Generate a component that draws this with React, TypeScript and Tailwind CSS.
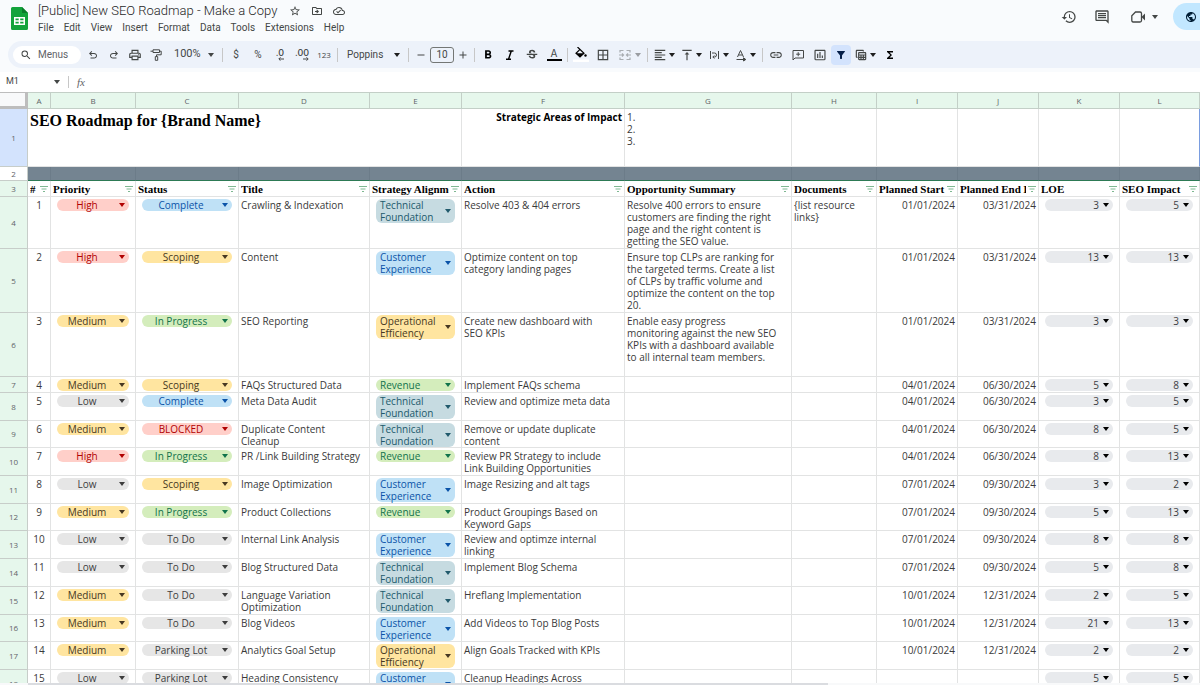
import type { ReactNode } from "react";
import {
  MdAdd,
  MdBorderAll,
  MdFilterAlt,
  MdFormatAlignLeft,
  MdFormatBold,
  MdFormatColorFill,
  MdFormatItalic,
  MdFunctions,
  MdHistory,
  MdInsertChartOutlined,
  MdLink,
  MdOutlineAddComment,
  MdOutlineCloudDone,
  MdOutlineDriveFileMove,
  MdOutlineInsertComment,
  MdOutlinePrint,
  MdPublic,
  MdRemove,
  MdSearch,
  MdStarBorder,
  MdStrikethroughS,
  MdTableView,
  MdVerticalAlignTop,
} from "react-icons/md";

type Row = {
  n: number;
  height: string;
  priority: string;
  status: string;
  title: string;
  strategy: string;
  action: string;
  summary?: string;
  docs?: string;
  start?: string;
  end?: string;
  loe: number;
  impact: number;
};

const TECH = "Technical\nFoundation";
const CUSTOMER = "Customer\nExperience";
const OPS = "Operational\nEfficiency";

const rows: Row[] = [
  { n: 1, height: "h-[52px]", priority: "High", status: "Complete", title: "Crawling & Indexation", strategy: TECH, action: "Resolve 403 & 404 errors", summary: "Resolve 400 errors to ensure\ncustomers are finding the right\npage and the right content is\ngetting the SEO value.", docs: "{list resource\nlinks}", start: "01/01/2024", end: "03/31/2024", loe: 3, impact: 5 },
  { n: 2, height: "h-[64px]", priority: "High", status: "Scoping", title: "Content", strategy: CUSTOMER, action: "Optimize content on top\ncategory landing pages", summary: "Ensure top CLPs are ranking for\nthe targeted terms. Create a list\nof CLPs by traffic volume and\noptimize the content on the top\n20.", start: "01/01/2024", end: "03/31/2024", loe: 13, impact: 13 },
  { n: 3, height: "h-[64px]", priority: "Medium", status: "In Progress", title: "SEO Reporting", strategy: OPS, action: "Create new dashboard with\nSEO KPIs", summary: "Enable easy progress\nmonitoring against the new SEO\nKPIs with a dashboard available\nto all internal team members.", start: "01/01/2024", end: "03/31/2024", loe: 3, impact: 3 },
  { n: 4, height: "h-[16px]", priority: "Medium", status: "Scoping", title: "FAQs Structured Data", strategy: "Revenue", action: "Implement FAQs schema", start: "04/01/2024", end: "06/30/2024", loe: 5, impact: 8 },
  { n: 5, height: "h-[28px]", priority: "Low", status: "Complete", title: "Meta Data Audit", strategy: TECH, action: "Review and optimize meta data", start: "04/01/2024", end: "06/30/2024", loe: 3, impact: 5 },
  { n: 6, height: "h-[27px]", priority: "Medium", status: "BLOCKED", title: "Duplicate Content\nCleanup", strategy: TECH, action: "Remove or update duplicate\ncontent", start: "04/01/2024", end: "06/30/2024", loe: 8, impact: 5 },
  { n: 7, height: "h-[28px]", priority: "High", status: "In Progress", title: "PR /Link Building Strategy", strategy: "Revenue", action: "Review PR Strategy to include\nLink Building Opportunities", start: "04/01/2024", end: "06/30/2024", loe: 8, impact: 13 },
  { n: 8, height: "h-[28px]", priority: "Low", status: "Scoping", title: "Image Optimization", strategy: CUSTOMER, action: "Image Resizing and alt tags", start: "07/01/2024", end: "09/30/2024", loe: 3, impact: 2 },
  { n: 9, height: "h-[27px]", priority: "Medium", status: "In Progress", title: "Product Collections", strategy: "Revenue", action: "Product Groupings Based on\nKeyword Gaps", start: "07/01/2024", end: "09/30/2024", loe: 5, impact: 13 },
  { n: 10, height: "h-[28px]", priority: "Low", status: "To Do", title: "Internal Link Analysis", strategy: CUSTOMER, action: "Review and optimze internal\nlinking", start: "07/01/2024", end: "09/30/2024", loe: 8, impact: 8 },
  { n: 11, height: "h-[28px]", priority: "Low", status: "To Do", title: "Blog Structured Data", strategy: TECH, action: "Implement Blog Schema", start: "07/01/2024", end: "09/30/2024", loe: 5, impact: 8 },
  { n: 12, height: "h-[28px]", priority: "Medium", status: "To Do", title: "Language Variation\nOptimization", strategy: TECH, action: "Hreflang Implementation", start: "10/01/2024", end: "12/31/2024", loe: 2, impact: 5 },
  { n: 13, height: "h-[27px]", priority: "Medium", status: "To Do", title: "Blog Videos", strategy: CUSTOMER, action: "Add Videos to Top Blog Posts", start: "10/01/2024", end: "12/31/2024", loe: 21, impact: 13 },
  { n: 14, height: "h-[28px]", priority: "Medium", status: "Parking Lot", title: "Analytics Goal Setup", strategy: OPS, action: "Align Goals Tracked with KPIs", start: "10/01/2024", end: "12/31/2024", loe: 2, impact: 2 },
  { n: 15, height: "h-[28px]", priority: "Low", status: "Parking Lot", title: "Heading Consistency", strategy: CUSTOMER, action: "Cleanup Headings Across", loe: 5, impact: 5 },
];

const columns = [
  { letter: "A", width: "w-[23px]", label: "#" },
  { letter: "B", width: "w-[85px]", label: "Priority" },
  { letter: "C", width: "w-[103px]", label: "Status" },
  { letter: "D", width: "w-[131px]", label: "Title" },
  { letter: "E", width: "w-[92px]", label: "Strategy Alignment" },
  { letter: "F", width: "w-[163px]", label: "Action" },
  { letter: "G", width: "w-[167px]", label: "Opportunity Summary" },
  { letter: "H", width: "w-[85px]", label: "Documents" },
  { letter: "I", width: "w-[81px]", label: "Planned Start Date" },
  { letter: "J", width: "w-[81px]", label: "Planned End Date" },
  { letter: "K", width: "w-[81px]", label: "LOE" },
  { letter: "L", width: "w-[80px]", label: "SEO Impact" },
];

const chipColors: Record<string, string> = {
  High: "bg-[#ffcfc9] text-[#b10202]",
  BLOCKED: "bg-[#ffcfc9] text-[#b10202]",
  Medium: "bg-[#ffe5a0] text-[#473822]",
  Scoping: "bg-[#ffe5a0] text-[#473822]",
  [OPS]: "bg-[#ffe5a0] text-[#473822]",
  Complete: "bg-[#bfe1f6] text-[#0a53a8]",
  [CUSTOMER]: "bg-[#bfe1f6] text-[#0a53a8]",
  "In Progress": "bg-[#d4edbc] text-[#11734b]",
  Revenue: "bg-[#d4edbc] text-[#11734b]",
  [TECH]: "bg-[#c6dbe1] text-[#215a6c]",
};

const menus = ["File", "Edit", "View", "Insert", "Format", "Data", "Tools", "Extensions", "Help"];

const cell = "border-r border-b border-[#e2e3e3] px-0.5 pt-0.5 pb-0 align-top whitespace-pre";
const rowHead = "border-r border-b border-[#c7cdc9] p-0 text-center align-middle text-[8px] font-normal text-[#5f6368]";

function Caret({ className = "" }: { className?: string }) {
  return (
    <svg viewBox="0 0 6 4" className={`h-1 w-1.5 shrink-0 fill-current ${className}`} aria-hidden="true">
      <path d="M0 0h6L3 4z" />
    </svg>
  );
}

function Chip({ value, options, label }: { value: string; options: string[]; label: string }) {
  const color = chipColors[value] ?? "bg-[#e6e6e6] text-[#3d3d3d]";
  return (
    <div className={`relative mx-1 flex h-3 items-center rounded-full ${color}`}>
      <select
        aria-label={label}
        defaultValue={value}
        className="h-4 w-full shrink-0 appearance-none pr-3 text-center leading-4 outline-none [text-align-last:center]"
      >
        {options.map((o) => (
          <option key={o}>{o}</option>
        ))}
      </select>
      <Caret className="pointer-events-none absolute top-1 right-1" />
    </div>
  );
}

function ScoreChip({ value, label }: { value: number; label: string }) {
  return (
    <div className="relative mx-1 flex h-3 items-center rounded-full bg-[#e8eaed] text-[#3c4043]">
      <select
        aria-label={label}
        defaultValue={value}
        className="h-4 w-full shrink-0 appearance-none pr-3.5 text-right leading-4 outline-none [text-align-last:right]"
      >
        {[1, 2, 3, 5, 8, 13, 21].map((o) => (
          <option key={o}>{o}</option>
        ))}
      </select>
      <Caret className="pointer-events-none absolute top-1 right-1 text-black" />
    </div>
  );
}

function StrategyChip({ value }: { value: string }) {
  return (
    <div className="px-1">
      <button
        type="button"
        aria-haspopup="listbox"
        className={`flex w-full items-center justify-between rounded-md px-1 text-left leading-3 whitespace-pre ${chipColors[value]}`}
      >
        {value}
        <Caret />
      </button>
    </div>
  );
}

function Tool({ label, className = "w-[22px]", children }: { label: string; className?: string; children: ReactNode }) {
  return (
    <button
      type="button"
      aria-label={label}
      className={`flex h-5 shrink-0 items-center justify-center rounded-sm text-[#444746] ${className}`}
    >
      {children}
    </button>
  );
}

function ToolMenu({ label, className = "w-[27px]", children }: { label: string; className?: string; children: ReactNode }) {
  return (
    <Tool label={label} className={`gap-0.5 ${className}`}>
      {children}
      <Caret className="text-[#1f1f1f]" />
    </Tool>
  );
}

function Sep() {
  return <span className="mx-0.5 h-3.5 w-px shrink-0 bg-[#c7c7c7]" />;
}

// Icons drawn on the 960 unit symbol grid
function Symbol({ d }: { d: string }) {
  return (
    <svg viewBox="0 -960 960 960" className="size-3 fill-current" aria-hidden="true">
      <path d={d} />
    </svg>
  );
}

function FilterLines() {
  return (
    <svg viewBox="0 0 8 6" className="h-1.5 w-2 shrink-0 fill-none stroke-[#7fb892]" aria-hidden="true">
      <path d="M0 .5h8M1.5 3h5M3 5.5h2" />
    </svg>
  );
}

function TopBar() {
  return (
    <header className="flex h-[41px] shrink-0 items-start">
      <svg viewBox="0 0 17 23" className="mt-[7px] ml-[11px] h-[23px] w-[17px] shrink-0" aria-label="Sheets">
        <path d="M1.5 0H11l6 6v15.500a1.500 1.500 0 0 1-1.500 1.500h-14A1.500 1.500 0 0 1 0 21.500v-20A1.500 1.500 0 0 1 1.500 0z" fill="#13a33b" />
        <path d="M11 0l6 6h-6z" fill="#0b7d2b" />
        <path d="M3 10h11v8H3zM4.500 11.500v1.800h3.200v-1.800zm4.700 0v1.800h3.300v-1.800zM4.500 14.800v1.700h3.200v-1.700zm4.700 0v1.700h3.300v-1.700z" fill="#fff" fillRule="evenodd" />
      </svg>
      <div className="ml-2.5 pt-[3px]">
        <div className="flex h-4 items-center">
          <h1 className="font-['Roboto',sans-serif] text-[13px] leading-4 font-light whitespace-nowrap text-[#1f1f1f]">
            [Public] New SEO Roadmap - Make a Copy
          </h1>
          <div className="ml-3 flex items-center gap-2.5 text-[#444746]">
            <button type="button" aria-label="Star"><MdStarBorder className="size-3" /></button>
            <button type="button" aria-label="Move"><MdOutlineDriveFileMove className="size-3" /></button>
            <button type="button" aria-label="Saved to Drive"><MdOutlineCloudDone className="size-3" /></button>
          </div>
        </div>
        <nav className="flex gap-2.5 font-['Roboto',sans-serif] text-[10px] leading-[18px] text-[#444746]">
          {menus.map((m) => (
            <button type="button" key={m}>{m}</button>
          ))}
        </nav>
      </div>
      <div className="ml-auto flex items-center pt-[3px] text-[#444746]">
        <button type="button" aria-label="Version history"><MdHistory className="size-4" /></button>
        <button type="button" aria-label="Comments" className="ml-[17px]"><MdOutlineInsertComment className="size-4" /></button>
        <button type="button" aria-label="Join a call" className="ml-[21px] flex items-center gap-1.5">
          <svg viewBox="0 0 15 12" className="h-3 w-[15px]" aria-hidden="true">
            <path d="M4.500 1H9a1.500 1.500 0 0 1 1.500 1.500v7A1.500 1.500 0 0 1 9 11H2A1.500 1.500 0 0 1 .8 9.500V4.700z" fill="none" stroke="currentColor" strokeWidth="1.300" />
            <path d="M10.500 6l3.500-3.500v7z" fill="currentColor" />
          </svg>
          <Caret />
        </button>
        <button type="button" aria-label="Share" className="ml-[15px] flex h-[27px] w-[27px] items-center justify-end rounded-l-full bg-[#c2e7ff] pr-[3px] text-[#001d35]">
          <MdPublic className="size-3" />
        </button>
      </div>
    </header>
  );
}

function Toolbar() {
  return (
    <div className="ml-2 flex h-[27px] shrink-0 items-center rounded-l-full bg-[#edf2fa] pl-[5px] text-[#444746]">
      <label className="flex h-[18px] w-[68px] shrink-0 items-center gap-1.5 rounded-full bg-white pl-[7px]">
        <MdSearch className="size-3 shrink-0" />
        <input aria-label="Menus" placeholder="Menus" className="w-10 font-['Roboto',sans-serif] text-[10px] leading-4 outline-none placeholder:text-[#5f6368]" />
      </label>
      <div className="ml-px flex">
        <Tool label="Undo" className="w-[21px]">
          <Symbol d="M280-200v-80h284q63 0 109.500-40T720-420q0-60-46.500-100T564-560H312l104 104-56 56-200-200 200-200 56 56-104 104h252q97 0 166.500 63T800-420q0 94-69.500 157T564-200H280Z" />
        </Tool>
        <Tool label="Redo" className="w-[21px]">
          <Symbol d="M396-200q-97 0-166.500-63T160-420q0-94 69.500-157T396-640h252L544-744l56-56 200 200-200 200-56-56 104-104H396q-63 0-109.500 40T240-420q0 60 46.500 100T396-280h284v80H396Z" />
        </Tool>
        <Tool label="Print" className="w-[21px]"><MdOutlinePrint className="size-3.5" /></Tool>
        <Tool label="Paint format" className="w-[21px]">
          <svg viewBox="0 0 12 12" className="size-3 fill-none stroke-current" aria-hidden="true">
            <path d="M3 .8h6.500v2.700H3zM.5 2.200H3M9.500 2.200h1.700v3.600H6.500v1.700M5.300 7.600h2.400v3.700H5.300z" />
          </svg>
        </Tool>
      </div>
      <label className="flex w-[54px] shrink-0 items-center">
        <select aria-label="Zoom" className="w-[42px] appearance-none pl-2 font-['Roboto',sans-serif] text-[11px] outline-none">
          <option>100%</option>
        </select>
        <Caret />
      </label>
      <Sep />
      <Tool label="Currency"><span className="font-['Roboto',sans-serif] text-[10px]">$</span></Tool>
      <Tool label="Percent"><span className="font-['Roboto',sans-serif] text-[10px]">%</span></Tool>
      <Tool label="Decrease decimals">
        <span className="flex flex-col items-end text-[9px] leading-[8px] font-medium">
          .0
          <svg viewBox="0 0 6 4" className="h-1 w-1.5 fill-none stroke-current" aria-hidden="true"><path d="M6 2H1M2.500.3L.8 2l1.700 1.700" /></svg>
        </span>
      </Tool>
      <Tool label="Increase decimals">
        <span className="flex flex-col items-end text-[9px] leading-[8px] font-medium">
          .00
          <svg viewBox="0 0 6 4" className="h-1 w-1.5 fill-none stroke-current" aria-hidden="true"><path d="M0 2h5M3.500.3L5.200 2 3.500 3.700" /></svg>
        </span>
      </Tool>
      <Tool label="More formats"><span className="font-['Open_Sans',sans-serif] text-[8px]">123</span></Tool>
      <Sep />
      <label className="flex w-[66px] shrink-0 items-center">
        <select aria-label="Font" className="w-[54px] appearance-none pl-[7px] font-['Roboto',sans-serif] text-[10px] outline-none">
          <option>Poppins</option>
        </select>
        <Caret className="text-[#1f1f1f]" />
      </label>
      <Sep />
      <Tool label="Decrease font size" className="w-[19px]"><MdRemove className="size-3" /></Tool>
      <input aria-label="Font size" defaultValue="10" className="h-4 w-6 shrink-0 rounded-[3px] border border-[#747775] text-center font-['Roboto',sans-serif] text-[10px] outline-none" />
      <Tool label="Increase font size" className="w-[18px]"><MdAdd className="size-3" /></Tool>
      <Sep />
      <Tool label="Bold"><MdFormatBold className="size-3.5 text-black" /></Tool>
      <Tool label="Italic">
        <svg viewBox="0 0 12 12" className="size-3 fill-none stroke-black" strokeWidth="1.400" aria-hidden="true">
          <path d="M4.500 2h5M2 10.300h5M7.300 2L4.500 10.300" />
        </svg>
      </Tool>
      <Tool label="Strikethrough"><MdStrikethroughS className="size-3.5" /></Tool>
      <Tool label="Text color">
        <span className="w-[15px] border-b-2 border-black text-center text-[10px] leading-[11px]">A</span>
      </Tool>
      <Sep />
      <Tool label="Fill color">
        <svg viewBox="0 0 16 15" className="h-[15px] w-4" aria-hidden="true">
          <path d="M4.500 0L11 6.300 7 10 3 6.300l3.500-3.500" fill="none" stroke="#000" strokeWidth="1.200" />
          <path d="M3 6.300h8L7 10z" />
          <circle cx="12.500" cy="8.500" r="1.200" />
          <path d="M0 12.500h16V15H0z" fill="#fff" />
        </svg>
      </Tool>
      <Tool label="Borders"><MdBorderAll className="size-3.5" /></Tool>
      <ToolMenu label="Merge cells" className="w-[31px] gap-1 opacity-40">
        <svg viewBox="0 0 12 12" className="size-3 fill-none stroke-current" strokeWidth="1.200" aria-hidden="true">
          <path d="M4.500 1.500H1v2M7.500 1.500H11v2M4.500 10.500H1v-2M7.500 10.500H11v-2M0 6h4.500M3 4.500L4.500 6 3 7.500M12 6H7.500M9 4.500L7.500 6 9 7.500" />
        </svg>
      </ToolMenu>
      <Sep />
      <div className="flex pr-0.5">
        <ToolMenu label="Horizontal align"><MdFormatAlignLeft className="size-3.5" /></ToolMenu>
        <ToolMenu label="Vertical align"><MdVerticalAlignTop className="size-3.5" /></ToolMenu>
        <ToolMenu label="Text wrapping">
          <svg viewBox="0 0 14 14" className="size-3.5 fill-none stroke-current" aria-hidden="true">
            <path d="M3.500 3v8M11.500 3v8M5 5h2.500a2 2 0 0 1 0 4H6M7.300 7.500L5.800 9l1.500 1.500" />
          </svg>
        </ToolMenu>
        <ToolMenu label="Text rotation">
          <svg viewBox="0 0 14 14" className="size-3.5 fill-none stroke-current" aria-hidden="true">
            <path d="M3.500 9L6.500 2.500 9.500 9M4.600 7h3.800M2.500 11.500h7.500" />
            <path d="M9.500 9.800l2.300 1.700-2.300 1.500z" fill="currentColor" />
          </svg>
        </ToolMenu>
      </div>
      <Sep />
      <Tool label="Insert link"><MdLink className="size-3.5" /></Tool>
      <Tool label="Insert comment">
        <svg viewBox="0 0 12 12" className="size-3 fill-none stroke-current" aria-hidden="true">
          <path d="M1 11V1.500h10.500v7.500H3zM6.200 3.200v4M4.200 5.200h4" />
        </svg>
      </Tool>
      <Tool label="Insert chart"><MdInsertChartOutlined className="size-3.5" /></Tool>
      <Tool label="Filter" className="w-5 bg-[#d3e3fd]"><MdFilterAlt className="size-3 text-[#041e49]" /></Tool>
      <ToolMenu label="Filter views" className="w-7">
        <MdTableView className="size-3.5" />
      </ToolMenu>
      <Tool label="Functions"><MdFunctions className="size-3 text-black" /></Tool>
    </div>
  );
}

function FormulaBar() {
  return (
    <div className="mt-1 flex h-5 shrink-0 items-center bg-white pl-1.5">
      <input aria-label="Name box" defaultValue="M1" className="w-12 font-['Roboto',sans-serif] text-[9px] text-[#444746] outline-none" />
      <Caret className="text-[#444746]" />
      <span className="ml-2 h-3 w-px bg-[#c7c7c7]" />
      <span className="ml-2 font-['Liberation_Serif',serif] text-[11px] text-[#5f6368] italic">fx</span>
      <input aria-label="Formula" className="ml-2 flex-1 outline-none" />
    </div>
  );
}

function Sheet() {
  return (
    <table className="w-full table-fixed border-separate border-spacing-0 font-['Open_Sans',sans-serif] text-[10px] leading-3 text-[#3a3a3a]">
      <colgroup>
        <col className="w-[28px]" />
        {columns.map((c) => (
          <col key={c.letter} className={c.width} />
        ))}
      </colgroup>
      <thead>
        <tr>
          <td className="h-[17px] border-t border-r-3 border-b-3 border-[#bdbdbd] bg-[#f8f9fa] p-0" />
          {columns.map((c) => (
            <th key={c.letter} scope="col" className="h-[17px] border-t border-r border-b border-[#c3cfc7] bg-[#e6f7ec] p-0 text-center text-[8px] leading-3 font-normal text-[#5f6368]">
              {c.letter}
            </th>
          ))}
        </tr>
      </thead>
      <tbody>
        <tr>
          <th scope="row" className={`${rowHead} h-[58px] bg-[#d3e3fd]`}>1</th>
          <td colSpan={5} className={`${cell} font-['Liberation_Serif',serif] text-[16px] leading-5 font-bold text-black`}>
            SEO Roadmap for {"{Brand Name}"}
          </td>
          <td className={`${cell} text-right font-bold text-black`}>Strategic Areas of Impact</td>
          <td className={cell}>{"1.\n2.\n3."}</td>
          <td className={cell} />
          <td className={cell} />
          <td className={cell} />
          <td className={cell} />
          <td className={`${cell} border-r-[#7a9de0]`} />
        </tr>
        <tr>
          <th scope="row" className={`${rowHead} h-[14px] bg-white leading-3`}>2</th>
          {columns.map((c) => (
            <td key={c.letter} className="border-r border-b border-r-[#6c7c89] border-b-[#2d7a55] bg-[#748491] p-0" />
          ))}
        </tr>
        <tr>
          <th scope="row" className={`${rowHead} h-[16px] bg-[#e6f7ec]`}>3</th>
          {columns.map((c) => (
            <th key={c.letter} scope="col" className="border-r border-b border-[#e2e3e3] px-0.5 py-0 font-['Liberation_Serif',serif] text-[11px] font-bold text-black">
              <div className="flex items-center gap-0.5">
                <span className="min-w-0 flex-1 overflow-hidden text-left whitespace-nowrap">{c.label}</span>
                <button type="button" aria-label={`Filter ${c.label}`}><FilterLines /></button>
              </div>
            </th>
          ))}
        </tr>
        {rows.map((r) => (
          <tr key={r.n}>
            <th scope="row" className={`${rowHead} ${r.height} bg-[#e6f7ec] leading-3`}>{r.n + 3}</th>
            <td className={`${cell} text-center`}>{r.n}</td>
            <td className={cell}>
              <Chip label="Priority" value={r.priority} options={["High", "Medium", "Low"]} />
            </td>
            <td className={cell}>
              <Chip label="Status" value={r.status} options={["Complete", "In Progress", "Scoping", "To Do", "BLOCKED", "Parking Lot"]} />
            </td>
            <td className={cell}>{r.title}</td>
            <td className={cell}><StrategyChip value={r.strategy} /></td>
            <td className={cell}>{r.action}</td>
            <td className={cell}>{r.summary}</td>
            <td className={cell}>{r.docs}</td>
            <td className={`${cell} text-right`}>{r.start}</td>
            <td className={`${cell} text-right`}>{r.end}</td>
            <td className={cell}><ScoreChip label="LOE" value={r.loe} /></td>
            <td className={cell}><ScoreChip label="SEO Impact" value={r.impact} /></td>
          </tr>
        ))}
      </tbody>
    </table>
  );
}

export default function App() {
  return (
    <div className="flex h-screen flex-col overflow-hidden bg-[#f9fbfd] font-['Inter',sans-serif]">
      <TopBar />
      <Toolbar />
      <FormulaBar />
      <main className="min-h-0 flex-1 overflow-hidden bg-white">
        <Sheet />
      </main>
      <div className="h-0.5 shrink-0 bg-[#f8f9fa]">
        <div className="ml-7 h-0.5 w-2/3 bg-[#dadce0]" />
      </div>
    </div>
  );
}
